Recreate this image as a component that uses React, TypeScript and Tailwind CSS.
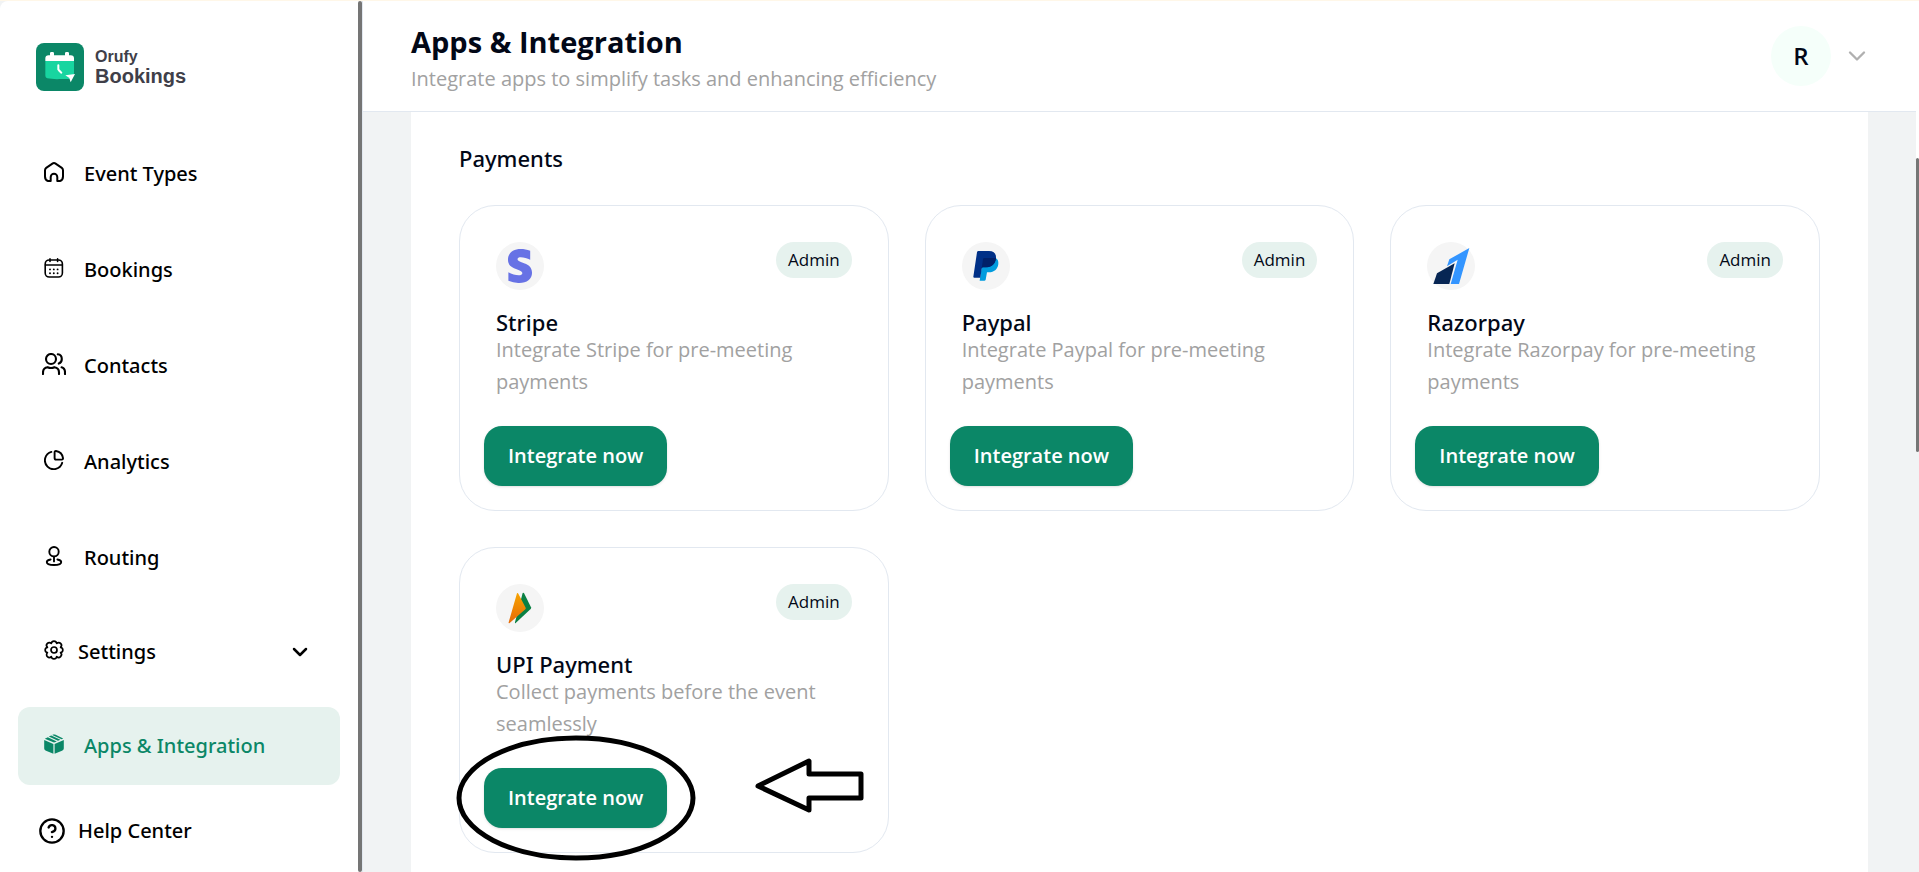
import type { ReactNode } from 'react';
import { ChevronDown, HelpCircle } from 'lucide-react';
import { FaStripeS } from 'react-icons/fa';

const HomeIcon = () => (
  <svg width="20" height="20" viewBox="0 0 20 20" fill="none" stroke="currentColor" strokeWidth="2" strokeLinejoin="round">
    <path d="M1 8.2C1 7.2 1.4 6.5 2.2 5.9L8.4 1.6C9.4 .9 10.6 .9 11.6 1.6L17.8 5.9C18.6 6.5 19 7.2 19 8.2V14.5C19 17 17.8 18.4 16 19H13.3V15A3.3 3.3 0 0 0 6.7 15V19H4C2.2 18.4 1 17 1 14.5Z" />
  </svg>
);

const CalendarIcon = () => (
  <svg width="20" height="20" viewBox="0 0 20 20" fill="none" stroke="currentColor" strokeWidth="1.6" strokeLinecap="round">
    <rect x="1.2" y="2" width="17.2" height="17" rx="4" />
    <path d="M1.5 7H18.2M6 .9V3.4M13.6 .9V3.4" />
    <path strokeWidth="1.9" d="M6 11.4h.01M9.8 11.4h.01M13.6 11.4h.01M6 15.2h.01M9.8 15.2h.01M13.6 15.2h.01" />
  </svg>
);

const ContactsIcon = () => (
  <svg width="24" height="22" viewBox="0 0 24 22" fill="none" stroke="currentColor" strokeWidth="2.1" strokeLinecap="round">
    <circle cx="9" cy="6" r="5" />
    <path d="M1 21V19.5C1 16.5 2.8 14.6 5.6 14.2C7.6 15.2 10.4 15.2 12.4 14.2C15.2 14.6 17 16.5 17 19.5V21" />
    <path d="M15.8 1.3C18.2 1.6 19.8 3.6 19.8 6C19.8 8.2 18.6 9.9 16.8 10.6M19.6 14.3C21.8 15 23 16.8 23 19.2V21" />
  </svg>
);

const AnalyticsIcon = () => (
  <svg width="20" height="20" viewBox="0 0 20 20" fill="none" stroke="currentColor" strokeWidth="1.9" strokeLinecap="round" strokeLinejoin="round">
    <path d="M7.4 1.9A8.8 8.8 0 1 0 18.2 12.8" />
    <path d="M10.6 2.2C10.6 1.4 11.2 .9 12 1C15.8 1.6 18.5 4.4 19 8.2C19.1 9 18.6 9.6 17.8 9.6H12.2C11.2 9.6 10.6 9 10.6 8Z" />
  </svg>
);

const RoutingIcon = () => (
  <svg width="20" height="20" viewBox="0 0 20 20" fill="none" stroke="currentColor" strokeWidth="1.9" strokeLinecap="round">
    <circle cx="10" cy="5.7" r="4.7" />
    <path d="M10 10.6V15.4M6.6 13.5C4.2 13.9 2.8 14.8 2.8 16C2.8 17.8 6 19 10 19S17.2 17.8 17.2 16C17.2 14.8 15.8 13.9 13.4 13.5" />
  </svg>
);

const SettingsIcon = () => (
  <svg width="20" height="20" viewBox="0 0 20 20" fill="none" stroke="currentColor" strokeWidth="1.7" strokeLinejoin="round">
    <circle cx="10" cy="10" r="3" />
    <path d="M16.6 7.3A2.75 2.75 0 0 1 16.6 12.7A2.75 2.75 0 0 1 12.7 16.6A2.75 2.75 0 0 1 7.3 16.6A2.75 2.75 0 0 1 3.4 12.7A2.75 2.75 0 0 1 3.4 7.3A2.75 2.75 0 0 1 7.3 3.4A2.75 2.75 0 0 1 12.7 3.4A2.75 2.75 0 0 1 16.6 7.3Z" />
  </svg>
);

const AppsIcon = () => (
  <svg width="20" height="20" viewBox="0 0 20 20" fill="currentColor">
    <path d="M.2 6L9.4 9.9V19.8L2 16.7C.8 16.2 .2 15.4 .2 14.2Z" />
    <path d="M19.8 6L10.6 9.9V19.8L18 16.7C19.2 16.2 19.8 15.4 19.8 14.2Z" />
    <path d="M.8 4.8L3.8 3.2L12.8 7.4L10 8.6Z" />
    <path d="M4.8 2.6L7.2 1.4L16.4 5.7L14 6.8Z" />
    <path d="M8.2 .9C9.4 .3 10.6 .3 11.6 .8L19.2 4.6L17.6 5.2Z" />
  </svg>
);

const BookingsLogo = () => (
  <svg width="48" height="48" viewBox="0 0 144 144" aria-hidden="true">
    <rect width="144" height="144" rx="24" fill="#0b8767" />
    <path d="M28 54H114V92L104 108H76C60 109 44 108 34 106C29 104 28 100 28 96Z" fill="#18d5a0" />
    <path d="M28 54V46Q28 37 38 37H42V31Q42 27 46 27H50Q54 27 54 31V37H87V31Q87 27 91 27H95Q99 27 99 31V37H104Q114 37 114 46V54Z" fill="#fff" />
    <path d="M67 67V79Q68 82 76 89" fill="none" stroke="#fff" strokeWidth="6" strokeLinecap="round" />
    <path d="M88 97L117 93L104 118L100 105Z" fill="#fff" />
  </svg>
);

const PaypalLogo = () => (
  <svg width="48" height="48" viewBox="126 156 144 144">
    <path d="M227 204C233 207 236 213 235 222C233 238 222 247 207 247H201L197 269Q196 272 193 272H179L185 232L189 204Z" fill="#009cde" />
    <path d="M175 183H207C221 183 229 190 228 205C226 223 214 232 198 232H189Q186 232 185 236L181 263H163Q160 263 160 260L171 187Q172 183 175 183Z" fill="#003087" />
    <path d="M192 204H228C226 223 214 232 198 232H189Q186 232 185 236L189 208Q190 204 192 204Z" fill="#012169" />
  </svg>
);

const RazorpayLogo = () => (
  <svg width="48" height="48" viewBox="0 0 144 144">
    <path d="M127 18L96 126H71L92 53L60 73L67 52Z" fill="#3395ff" />
    <path d="M83 64L30 94L19 126H67Z" fill="#072654" />
  </svg>
);

const UpiLogo = () => (
  <svg width="48" height="48" viewBox="168 159 144 144">
    <defs>
      <linearGradient id="upi" x1="0" y1="0" x2="0" y2="1">
        <stop offset="0" stopColor="#f7a400" />
        <stop offset="1" stopColor="#e66a08" />
      </linearGradient>
    </defs>
    <path d="M248 186Q251 184 253 188L273 229Q274 232 272 234L227 276Q224 278 225 274Z" fill="#0a8043" />
    <path d="M231 187Q233 184 235 188L257 230Q258 233 256 235L209 276Q205 278 206 274Z" fill="url(#upi)" />
  </svg>
);

const mainLinks = [
  { label: 'Event Types', icon: <HomeIcon /> },
  { label: 'Bookings', icon: <CalendarIcon /> },
  { label: 'Contacts', icon: <ContactsIcon /> },
  { label: 'Analytics', icon: <AnalyticsIcon /> },
  { label: 'Routing', icon: <RoutingIcon /> },
];

const payments = [
  { title: 'Stripe', description: 'Integrate Stripe for pre-meeting payments', logo: <FaStripeS className="h-[34px] w-[34px] text-[#6772e5]" /> },
  { title: 'Paypal', description: 'Integrate Paypal for pre-meeting payments', logo: <PaypalLogo /> },
  { title: 'Razorpay', description: 'Integrate Razorpay for pre-meeting payments', logo: <RazorpayLogo /> },
  { title: 'UPI Payment', description: 'Collect payments before the event seamlessly', logo: <UpiLogo />, marked: true },
];

function NavLink({ label, icon, active = false }: { label: string; icon: ReactNode; active?: boolean }) {
  return (
    <a
      href="#"
      className={`flex h-[78px] items-center gap-[18px] rounded-xl pl-6 ${active ? 'bg-[#e6f2ee] text-[#0b8767]' : ''}`}
    >
      <span className="flex w-6 justify-center pb-1">{icon}</span>
      {label}
    </a>
  );
}

function Sidebar() {
  return (
    <aside className="flex w-[363px] shrink-0 rounded-tl-lg border-r border-slate-200 bg-white">
      <div className="flex-1 px-[18px] pt-[42px]">
        <a href="#" className="mb-11 flex items-center gap-[11px] pl-[18px] text-[#3f3f49]">
          <BookingsLogo />
          <span className="flex flex-col font-['Liberation_Sans',Arial,sans-serif] font-bold">
            <span className="text-base leading-[18px]">Orufy</span>
            <span className="text-xl leading-5">Bookings</span>
          </span>
        </a>
        <nav className="flex flex-col gap-[18px] font-['Noto_Sans','Segoe_UI',sans-serif] text-xl font-medium text-black">
          {mainLinks.map((link) => (
            <NavLink key={link.label} label={link.label} icon={link.icon} />
          ))}
          <button className="flex h-[74px] items-center gap-3 pr-7 pl-6">
            <span className="flex w-6 justify-center pb-1"><SettingsIcon /></span>
            Settings
            <ChevronDown className="ml-auto h-6 w-6" strokeWidth={2.5} />
          </button>
          <NavLink label="Apps & Integration" icon={<AppsIcon />} active />
          <a href="#" className="flex h-14 items-center gap-3 pl-5">
            <HelpCircle className="h-7 w-7" />
            Help Center
          </a>
        </nav>
      </div>
      <div className="w-1 rounded-full bg-[#757575]" />
    </aside>
  );
}

function Header() {
  return (
    <header className="flex h-[111px] shrink-0 items-center border-b border-slate-200 bg-white pr-12 pl-12">
      <div className="pt-1">
        <h1 className="text-[29px] leading-[42px] font-bold">Apps &amp; Integration</h1>
        <p className="text-xl leading-8 text-[#a1a1a1]">Integrate apps to simplify tasks and enhancing efficiency</p>
      </div>
      <button className="ml-auto flex items-center gap-3">
        <span className="flex h-[60px] w-[60px] items-center justify-center rounded-full bg-[#f5fffa] text-2xl font-semibold">R</span>
        <ChevronDown className="h-7 w-7 text-[#b0b0b0]" />
      </button>
    </header>
  );
}

function PaymentCard({ title, description, logo, marked }: { title: string; description: string; logo: ReactNode; marked?: boolean }) {
  return (
    <article className="relative rounded-[36px] border border-slate-200 px-9 pt-9 pb-6">
      <div className="flex items-start justify-between">
        <span className="flex h-12 w-12 items-center justify-center rounded-full bg-[#f5f5f5]">{logo}</span>
        <span className="flex h-9 items-center rounded-full bg-[#e6f2ee] px-3 text-[17px]">Admin</span>
      </div>
      <h3 className="mt-5 font-['Noto_Sans','Segoe_UI',sans-serif] text-[22px] leading-6 font-medium">{title}</h3>
      <p className="text-xl leading-8 text-[#a1a1a1]">{description}</p>
      <button className="mt-7 -ml-3 h-[60px] rounded-[18px] bg-[#0b8767] px-6 text-xl font-semibold text-white shadow-sm">
        Integrate now
      </button>
      {/* Hand-drawn marks pointing at the button */}
      {marked && (
        <svg className="pointer-events-none absolute top-0 left-0 overflow-visible" width="428" height="303" fill="none" stroke="#000" strokeWidth="5" strokeLinejoin="round">
          <ellipse cx="116" cy="250" rx="117" ry="60" />
          <path d="M298 238L349 213V226H401V250H349V262Z" />
        </svg>
      )}
    </article>
  );
}

export default function App() {
  return (
    <div className="flex h-screen overflow-hidden border-t border-[#fff7e8] bg-[#f1f3f4] font-['Open_Sans','Segoe_UI',sans-serif] text-[#020817]">
      <Sidebar />
      <div className="flex min-w-0 flex-1 flex-col">
        <Header />
        <main className="min-h-0 flex-1 overflow-hidden pr-[51px] pl-12">
          <section className="min-h-full bg-white px-12 pt-[30px] pb-12">
            <h2 className="mb-[31px] font-['Noto_Sans','Segoe_UI',sans-serif] text-[22px] leading-8 font-medium">Payments</h2>
            <div className="grid grid-cols-3 gap-9">
              {payments.map((item) => (
                <PaymentCard key={item.title} {...item} />
              ))}
            </div>
          </section>
        </main>
      </div>
      {/* Page scrollbar */}
      <div className="absolute top-px right-0 w-[3px] bg-white pt-[157px]">
        <div className="h-[294px] rounded-full bg-[#757575]" />
      </div>
    </div>
  );
}
